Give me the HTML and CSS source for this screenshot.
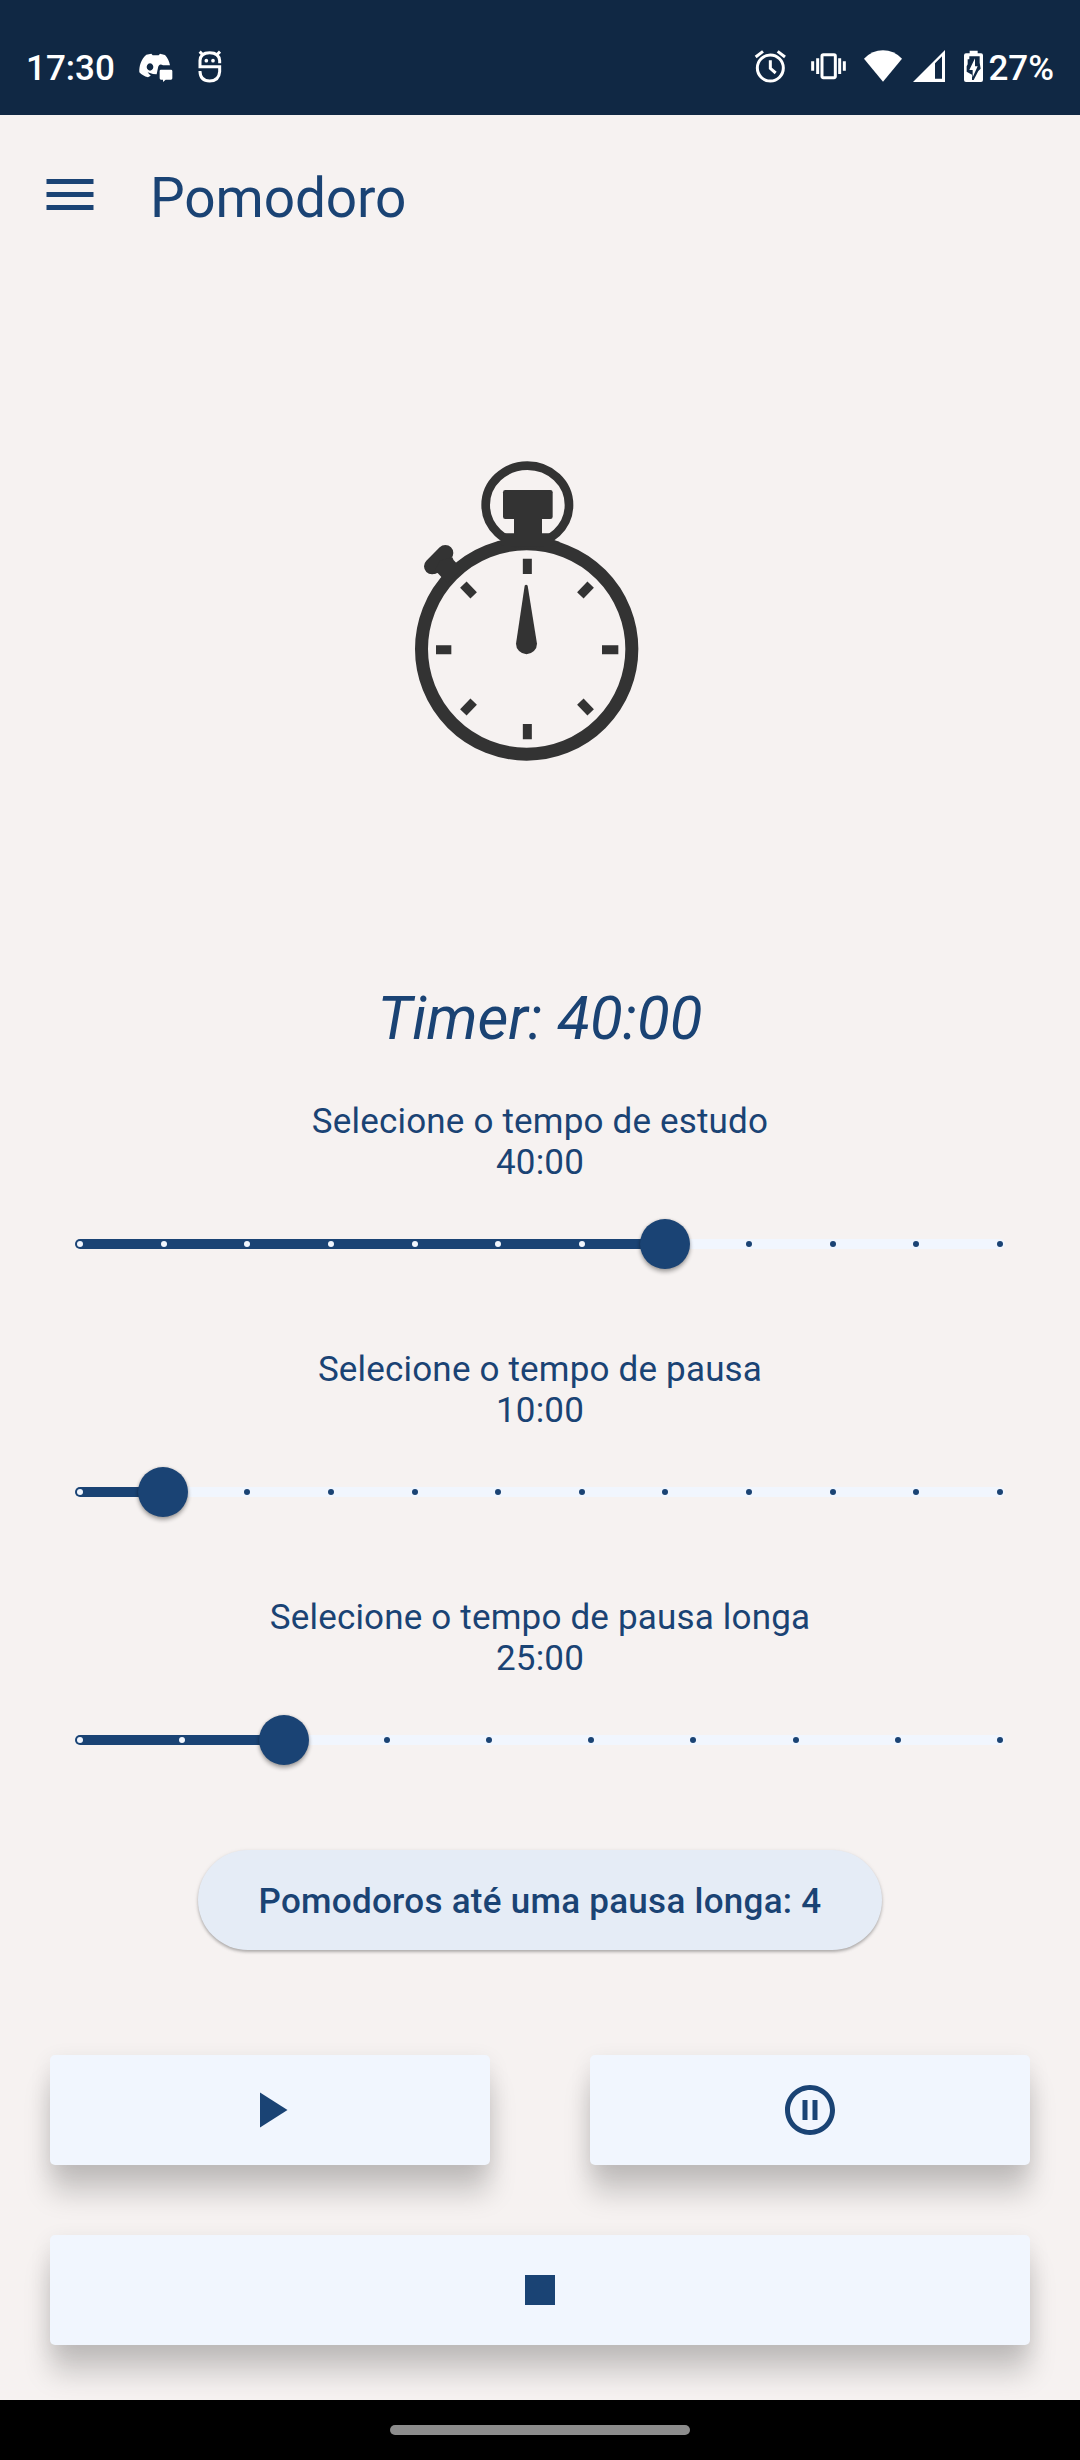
FILE: index.html
```html
<!DOCTYPE html>
<html lang="pt-BR">
<head>
<meta charset="utf-8">
<title>Pomodoro</title>
<link rel="stylesheet" href="styles.css">
</head>
<body>
<div class="phone">
  <header class="status">
    <span class="clock">17:30</span>
    <svg class="st-discord" width="40" height="34" viewBox="0 0 120 102" fill="#fff">
      <path fill-rule="evenodd" d="M34 11 L49 8 L53 13 H71 L75 8 L90 12 C98 20 103 32 105 43 H84 C76 37 70 42 69 50 L65 70 L54 69 L38 64 C43 71 47 73 47 74 L39 79 C28 77 20 71 13 64 C12 45 18 25 34 11 Z M45 37 a10 11 0 1 0 .1 0 Z"/>
      <path d="M78 56 H108 Q112 56 112 60 V82 Q112 86 108 86 H92 L84 93 V86 H78 Q74 86 74 82 V60 Q74 56 78 56 Z"/>
    </svg>
    <svg class="st-face" width="26" height="34" viewBox="0 0 78 102" fill="none" stroke="#fff" stroke-width="9">
      <path d="M68 43 V35 Q66 11 38 11 Q10 11 9 35 V53 H68 V68 Q66 96 38 96 Q10 96 9 68 V66"/>
      <path d="M8 8 L18 18 M69 8 L59 18"/>
      <circle cx="28" cy="35" r="5.500" fill="#fff" stroke="none"/>
      <circle cx="48" cy="35" r="5.500" fill="#fff" stroke="none"/>
    </svg>
    <span class="spacer"></span>
    <svg class="st-alarm" width="32" height="34" viewBox="0 0 96 102" fill="none" stroke="#fff" stroke-width="9">
      <circle cx="49" cy="57" r="39"/>
      <path d="M5 24 L27 7 M71 7 L93 24 M49 34 V58 L65 72"/>
    </svg>
    <svg class="st-vibrate" width="36" height="28" viewBox="0 0 108 84" fill="none" stroke="#fff" stroke-width="9">
      <rect x="36" y="8" width="40" height="69" rx="4"/>
      <path d="M23 19 V66 M89 19 V66 M8 28 V56 M103 28 V56"/>
    </svg>
    <svg class="st-wifi" width="38" height="32" viewBox="0 0 114 96" fill="#fff"><path d="M57 95 L0 26 Q25 1 57 1 T114 26 Z"/></svg>
    <svg class="st-signal" width="32" height="32" viewBox="0 0 96 96" fill="#fff"><path fill-rule="evenodd" d="M0 96 L96 0 V96 Z M66 40 V86 H87 V19 Z"/></svg>
    <svg class="st-battery" width="19" height="32" viewBox="0 0 57 96"><path fill="#fff" d="M17 2 H41 V10 H51 Q57 10 57 16 V90 Q57 96 51 96 H6 Q0 96 0 90 V16 Q0 10 6 10 H17 Z"/><path fill="#102844" d="M28 19 H47 V38 L50 56 L43 63 L29 90 H24 V74 L8 65 V49 L11 43 V28 H16 V19 Z"/><path fill="#fff" d="M33 25 L16 60 H26 V82 L41 49 H33 Z"/></svg>
    <span class="percent">27%</span>
  </header>

  <div class="appbar">
    <svg width="48" height="31" viewBox="0 0 48 31" fill="#1a4374"><path d="M.5 0h47v5H.5zM.5 13h47v5H.5zM.5 26h47v5H.5z"/></svg>
    <h1 class="title">Pomodoro</h1>
  </div>

  <main class="content">
    <svg class="stopwatch" width="270" height="340" viewBox="0 0 810 1020" fill="#333">
      <circle cx="410" cy="627" r="315.500" fill="none" stroke="#333" stroke-width="39"/>
      <ellipse cx="412" cy="195" rx="125" ry="118" fill="none" stroke="#333" stroke-width="26"/>
      <path d="M320 306 Q345 300 333 297 L345 280 H480 L490 299 L510 306 L480 318 H340 Z"/>
      <rect x="339" y="150" width="149" height="87" rx="7"/>
      <rect x="372" y="230" width="84" height="90"/>
      <path d="M126 379 L166 339" stroke="#333" stroke-width="48" stroke-linecap="round"/>
      <path d="M150 362 L187 352 Q188 358 197 367 L215 385 L172 430 L154 411 L143 399 L128 403 Z"/>
      <path d="M404 437 Q408 432 413 437 L441 611 A31 31 0 0 1 378 611 Z"/>
      <path d="M412 356 V402 M412 852 V898 M138 629 H184 M636 629 H685 M220 434 L251 466 M602 434 L571 466 M220 817 L251 785 M602 817 L571 785" fill="none" stroke="#333" stroke-width="27"/>
    </svg>

    <p class="timer">Timer: 40:00</p>

    <section class="setting">
      <p class="label">Selecione o tempo de estudo<br>40:00</p>
      <div class="slider">
        <div class="track"><div class="fill" style="width:590px"></div>
          <div class="ticks"><i class="on"></i><i class="on"></i><i class="on"></i><i class="on"></i><i class="on"></i><i class="on"></i><i class="on"></i><i></i><i></i><i></i><i></i><i></i></div>
          <div class="thumb" style="left:590px"></div>
        </div>
      </div>
    </section>

    <section class="setting">
      <p class="label">Selecione o tempo de pausa<br>10:00</p>
      <div class="slider">
        <div class="track"><div class="fill" style="width:88px"></div>
          <div class="ticks"><i class="on"></i><i></i><i></i><i></i><i></i><i></i><i></i><i></i><i></i><i></i><i></i><i></i></div>
          <div class="thumb" style="left:88px"></div>
        </div>
      </div>
    </section>

    <section class="setting">
      <p class="label">Selecione o tempo de pausa longa<br>25:00</p>
      <div class="slider">
        <div class="track"><div class="fill" style="width:209px"></div>
          <div class="ticks"><i class="on"></i><i class="on"></i><i></i><i></i><i></i><i></i><i></i><i></i><i></i><i></i></div>
          <div class="thumb" style="left:209px"></div>
        </div>
      </div>
    </section>

    <button class="chip">Pomodoros até uma pausa longa: 4</button>

    <div class="controls">
      <button class="control" aria-label="Iniciar"><svg width="60" height="60" viewBox="0 0 24 24" fill="#1a4374"><path d="M8 5v14l11-7z"/></svg></button>
      <button class="control" aria-label="Pausar"><svg width="60" height="60" viewBox="0 0 24 24" fill="#1a4374"><path d="M9 16h2V8H9v8zm3-14C6.480 2 2 6.480 2 12s4.480 10 10 10 10-4.480 10-10S17.520 2 12 2zm0 18c-4.410 0-8-3.590-8-8s3.590-8 8-8 8 3.590 8 8-3.590 8-8 8zm1-4h2V8h-2v8z"/></svg></button>
      <button class="control wide" aria-label="Parar"><svg width="60" height="60" viewBox="0 0 24 24" fill="#1a4374"><path d="M6 6h12v12H6z"/></svg></button>
    </div>
  </main>

  <footer class="navbar"><div class="handle"></div></footer>
</div>
</body>
</html>
```

FILE: styles.css
```css
* { box-sizing: border-box; }
body { margin: 0; font-family: Roboto, "Liberation Sans", sans-serif; color: #1a4374; }
h1, p { margin: 0; font-weight: 400; }
svg { display: block; flex: none; }
button { border: 0; padding: 0; font: inherit; color: inherit; }

.phone { width: 1080px; height: 2460px; display: flex; flex-direction: column; background: #f6f2f1; overflow: hidden; }

.status { height: 115px; padding: 20px 26px 0; display: flex; align-items: center; background: #102844; color: #fff; font-size: 35px; font-weight: 500; line-height: 41px; flex: none; }
.status svg { margin-bottom: 3px; }
.status .st-discord { margin-bottom: 0; margin-top: 1px; }
.clock { width: 109px; margin-top: 2px; }
.st-face { margin-left: 22px; }
.spacer { flex: 1; }
.st-vibrate { margin-left: 24px; }
.st-wifi { margin-left: 18px; }
.st-signal { margin-left: 11px; }
.st-battery { margin-left: 19px; }
.percent { margin-left: 5px; margin-top: 2px; }

.appbar { height: 325px; padding: 64px 46px 0; display: flex; align-items: flex-start; gap: 56px; flex: none; }
.title { font-size: 55px; line-height: 64px; margin-top: -13px; letter-spacing: -.1px; }

.content { flex: 1; display: flex; flex-direction: column; align-items: center; min-height: 0; }
.stopwatch { align-self: flex-start; margin-left: 390px; }
.timer { margin-top: 204px; margin-bottom: 47px; font-size: 60px; font-style: italic; line-height: 70px; }

.setting { width: 930px; height: 248px; flex: none; }
.label { text-align: center; font-size: 35px; line-height: 41px; letter-spacing: .18px; }
.slider { height: 122px; display: flex; align-items: center; }
.track { position: relative; width: 100%; height: 10px; border-radius: 5px; background: #f1f6fe; }
.fill { height: 10px; border-radius: 5px 0 0 5px; background: #1a4374; }
.ticks { position: absolute; inset: 2px; display: flex; justify-content: space-between; }
.ticks i { width: 6px; height: 6px; border-radius: 50%; background: #1a4374; }
.ticks .on { background: #f1f6fe; }
.thumb { position: absolute; top: -20px; width: 50px; height: 50px; margin-left: -25px; border-radius: 50%; background: #1a4374; box-shadow: 0 3px 4px rgba(0,0,0,.32), 0 0 3px rgba(0,0,0,.15); }

.chip { width: 684px; height: 100px; padding-top: 2px; margin-top: 5px; flex: none; border-radius: 50px; background: #e5ecf6; font-size: 35px; font-weight: 500; letter-spacing: .27px; box-shadow: 0 2px 3px rgba(0,0,0,.25), 0 1px 5px rgba(0,0,0,.08); }

.controls { width: 980px; margin-top: 105px; display: grid; grid-template-columns: 1fr 1fr; gap: 70px 100px; }
.control { height: 110px; border-radius: 5px; background: #f1f6fe; display: flex; align-items: center; justify-content: center; box-shadow: 0 29px 28px -1px rgba(0,0,0,.18), 0 6px 22px 0 rgba(0,0,0,.09); }
.wide { grid-column: 1 / 3; }

.navbar { height: 60px; flex: none; display: flex; align-items: center; justify-content: center; background: #000; position: relative; }
.handle { width: 300px; height: 10px; border-radius: 5px; background: #8c8c8c; }
```
